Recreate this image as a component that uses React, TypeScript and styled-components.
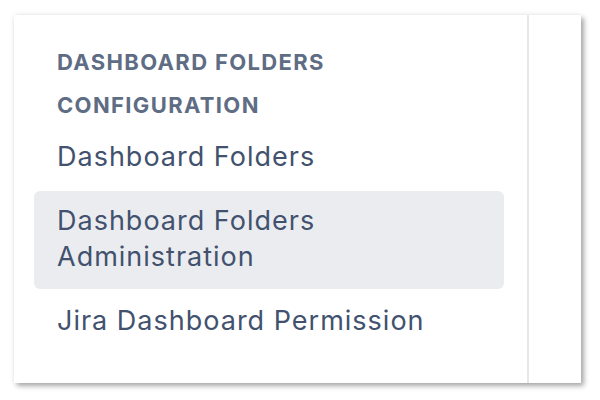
import styled, { createGlobalStyle } from 'styled-components';

const GlobalStyle = createGlobalStyle`
    html, body {
        margin: 0;
        padding: 0;
        background: #ffffff;
    }
    body {
        font-family: Inter, "Noto Sans", sans-serif;
    }
`;

const Page = styled.div`
    width: 600px;
    height: 400px;
    padding: 15px 0 0 14px;
    box-sizing: border-box;
`;

const Card = styled.div`
    width: 567px;
    height: 368px;
    display: flex;
    background: #ffffff;
    box-shadow: 3px 3px 5px rgba(0, 0, 0, 0.32), 0 0 6px rgba(0, 0, 0, 0.08);
`;

const SideNav = styled.nav`
    width: 515px;
    padding: 26px 23px 0 20px;
    box-sizing: border-box;
    border-right: 2px solid #e6e7ec;
`;

const Aside = styled.div`
    flex: 1;
`;

const Heading = styled.h3`
    margin: 0;
    padding: 0 23px;
    font-size: 22px;
    font-weight: 700;
    line-height: 43px;
    color: #5e6c84;
    text-transform: uppercase;
    letter-spacing: 1.35px;
`;

const List = styled.ul`
    list-style: none;
    margin: 0;
    padding: 0;
    display: flex;
    flex-direction: column;
    gap: 2px;
`;

const Item = styled.li<{ $active?: boolean }>`
    padding: 12px 23px 14px;
    border-radius: 6px;
    font-size: 27px;
    line-height: 36px;
    letter-spacing: 1px;
    color: #42526e;
    background: ${p => (p.$active ? '#ebecf0' : 'transparent')};
    cursor: pointer;
`;

const items = [
    { label: 'Dashboard Folders' },
    { label: 'Dashboard Folders Administration', active: true },
    { label: 'Jira Dashboard Permission' },
];

export default function App() {
    return (
        <>
            <GlobalStyle />
            <Page>
                <Card>
                    <SideNav>
                        <Heading>
                            Dashboard Folders
                            <br />
                            Configuration
                        </Heading>
                        <List>
                            {items.map(item => (
                                <Item key={item.label} $active={item.active}>
                                    {item.label}
                                </Item>
                            ))}
                        </List>
                    </SideNav>
                    <Aside />
                </Card>
            </Page>
        </>
    );
}
